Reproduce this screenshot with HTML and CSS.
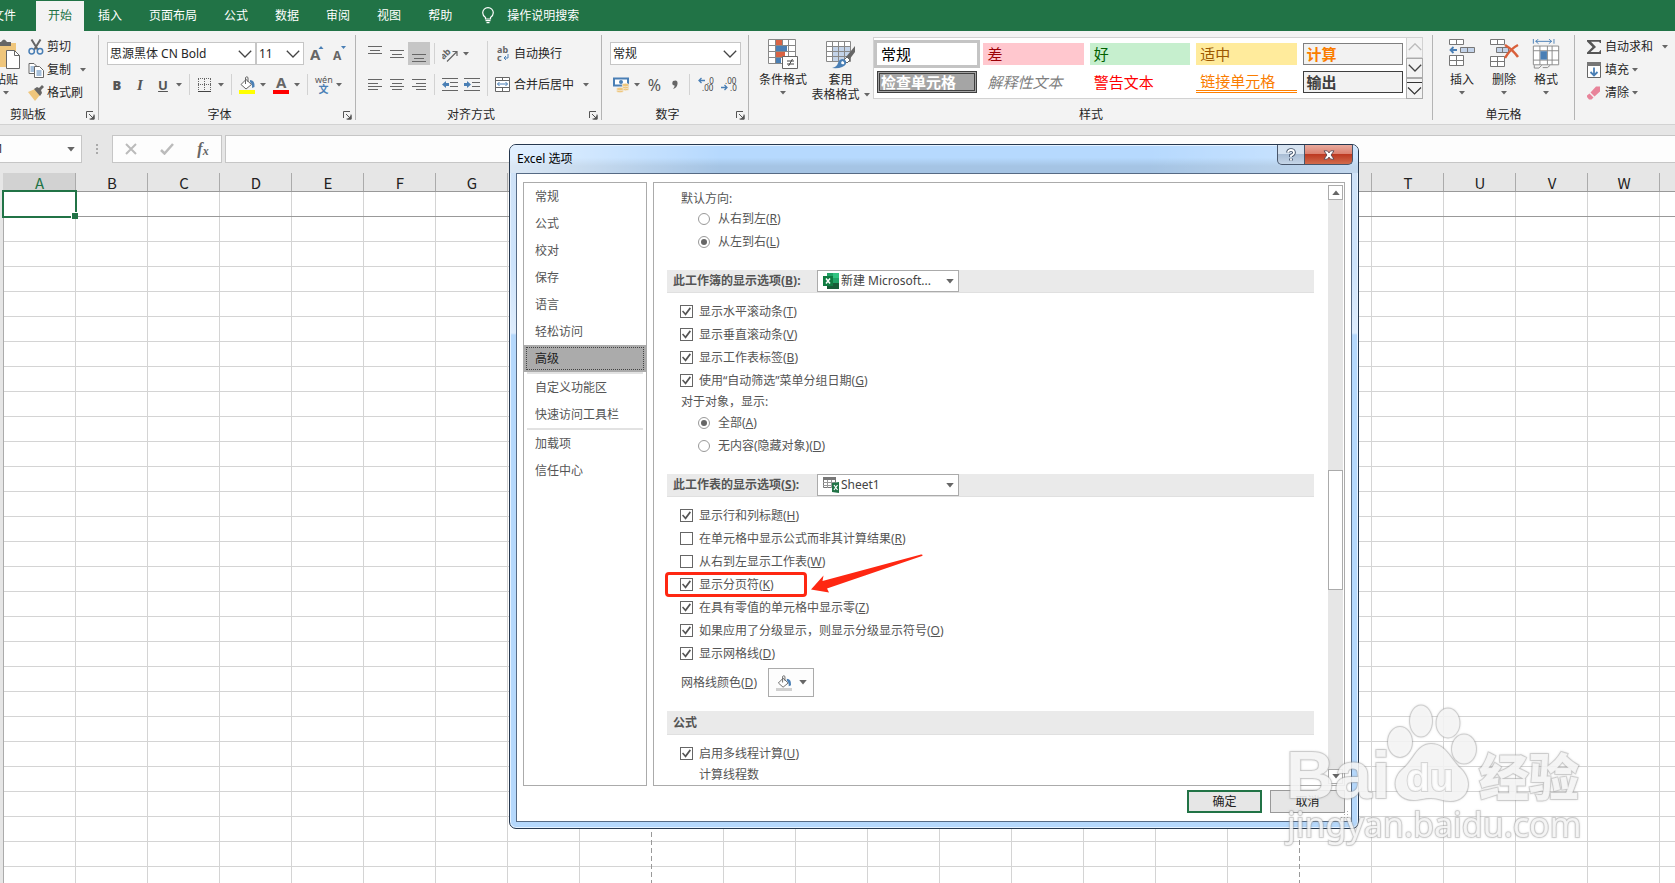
FILE: index.html
```
<!DOCTYPE html>
<html lang="zh-CN">
<head>
<meta charset="utf-8">
<title>Excel 选项</title>
<link rel="stylesheet" href="styles.css">
</head>
<body>
<svg class="sprite" aria-hidden="true">
  <symbol id="caret" viewBox="0 0 6 4"><path d="M0 0h6L3 3.6z" fill="#666"/></symbol>
  <symbol id="chev" viewBox="0 0 14 8"><path d="M.8.8 7 7 13.2.8" fill="none" stroke="#444" stroke-width="1.3"/></symbol>
  <symbol id="launch" viewBox="0 0 9 9"><path d="M.5 7V.5H7M3 3l4 4M8 3.5V8H3.5" fill="none" stroke="#555"/><path d="M8.500 4v4.500H4z" fill="#555"/></symbol>
  <symbol id="bucket" viewBox="0 0 16 16"><path d="M7 3.500 2 8.500 7 13l5.500-4.500z" fill="#fff" stroke="#666"/><path d="M6.500 8V1.500q1.500-1.500 2.500 0V6" fill="none" stroke="#666"/><path d="M11 4q5 0 4.500 7l-2.500 1q.5-4-2-6z" fill="#4a7fb5"/></symbol>
</svg>

<nav class="tabs">
  <button>文件</button><button class="on">开始</button><button>插入</button><button>页面布局</button><button>公式</button><button>数据</button><button>审阅</button><button>视图</button><button>帮助</button>
  <button class="tell"><svg width="12" height="17" viewBox="0 0 12 17" fill="none" stroke="#fff" stroke-width="1.200"><path d="M3.500 12V10.500Q.7 8.500.7 5.800A5.300 5.200 0 0 1 11.300 5.800Q11.300 8.500 8.500 10.500V12zM3.500 13.700h5M4.500 15.700h3"/></svg>操作说明搜索</button>
</nav>

<div class="ribbon">
  <section class="group g-clip">
    <div class="body">
      <button class="big paste"><svg width="28" height="30" viewBox="0 0 28 30"><path d="M0 4h24v24H0z" fill="#efc67c"/><path d="M5 7V3h4q3-5 6 0h4v4z" fill="#666"/><path d="M14.500 11.500h8l5 5v13h-13z" fill="#fff" stroke="#666"/><path d="M22.500 11.500v5h5" fill="none" stroke="#666"/></svg><span>粘贴</span><svg class="caret"><use href="#caret"/></svg></button>
      <div class="list">
        <button><svg width="16" height="16" viewBox="0 0 16 16" fill="none"><path d="M3.500.5 10 11M12.500.5 6 11" stroke="#666" stroke-width="2"/><circle cx="3.700" cy="12.300" r="2.700" stroke="#4a7fb5" stroke-width="1.500"/><circle cx="12" cy="12.300" r="2.700" stroke="#4a7fb5" stroke-width="1.500"/></svg>剪切</button>
        <button class="wide"><svg width="16" height="16" viewBox="0 0 16 16" fill="#fff" stroke="#666"><path d="M1 1.500h5l3 3v7H1z"/><path d="M2.500 5h4M2.500 7h4M2.500 9h4" stroke="#4a7fb5"/><path d="M6.500 4.500h5l4 4v7h-9z"/><path d="M8.500 9h5M8.500 11h5M8.500 13h5" stroke="#4a7fb5"/></svg>复制<svg class="caret"><use href="#caret"/></svg></button>
        <button><svg width="16" height="16" viewBox="0 0 16 16"><path d="M0 7l7-3 5 6-5 6z" fill="#efc67c"/><path d="M6 4l3-2 2 1 3-3 2 2-3 3 1 3-2 3z" fill="#666"/></svg>格式刷</button>
      </div>
    </div>
    <footer>剪贴板<svg class="launch"><use href="#launch"/></svg></footer>
  </section>

  <section class="group g-font">
    <div class="body stack">
      <div class="row tight">
        <label class="combo font-name"><select aria-label="字体"><option>思源黑体 CN Bold</option></select><svg class="chev"><use href="#chev"/></svg></label>
        <label class="combo font-size"><select aria-label="字号"><option>11</option></select><svg class="chev"><use href="#chev"/></svg></label>
        <button class="grow" aria-label="增大字号"><svg width="16" height="18" viewBox="0 0 16 18"><text x="0" y="15" class="ico-a">A</text><path d="M8.500 4h5L11 1z" fill="#4a7fb5"/></svg></button>
        <button class="grow" aria-label="减小字号"><svg width="16" height="18" viewBox="0 0 16 18"><text x="1" y="15" class="ico-a small">A</text><path d="M9 1h5l-2.500 3z" fill="#4a7fb5"/></svg></button>
      </div>
      <div class="row marks">
        <button class="ch"><b>B</b></button><button class="ch"><i>I</i></button>
        <button class="split"><span class="ch"><u>U</u></span><svg class="caret"><use href="#caret"/></svg></button><span class="sep"></span>
        <button class="split" aria-label="边框"><svg width="16" height="16" viewBox="0 0 16 16"><path d="M1.500 2v11M7.500 2v11M13.500 2v11M1 1.500h13M1 7.500h13" stroke="#666" stroke-dasharray="1 1"/><path d="M1 14.500h13" stroke="#444"/></svg><svg class="caret"><use href="#caret"/></svg></button><span class="sep"></span>
        <button class="split" aria-label="填充颜色"><svg width="16" height="18" viewBox="0 0 16 18"><use href="#bucket" width="16" height="16"/><path d="M0 14h16v4H0z" fill="#ff0"/></svg><svg class="caret"><use href="#caret"/></svg></button>
        <button class="split" aria-label="字体颜色"><svg width="16" height="18" viewBox="0 0 16 18"><text x="3" y="12" class="ico-a">A</text><path d="M0 14h16v4H0z" fill="red"/></svg><svg class="caret"><use href="#caret"/></svg></button><span class="sep"></span>
        <button class="split wen"><span>wén<em>文</em></span><svg class="caret"><use href="#caret"/></svg></button>
      </div>
    </div>
    <footer>字体<svg class="launch"><use href="#launch"/></svg></footer>
  </section>

  <section class="group g-align">
    <div class="body">
      <div class="stack aligns">
        <div class="row">
          <button class="sq" aria-label="顶端对齐"><svg width="14" height="18" viewBox="0 0 14 18" stroke="#666"><path d="M0 1.500h14M2 5.500h10M0 8.500h14"/></svg></button><button class="sq" aria-label="垂直居中"><svg width="14" height="18" viewBox="0 0 14 18" stroke="#666"><path d="M0 5.500h14M2 9.500h10M0 12.500h14"/></svg></button><button class="sq on" aria-label="底端对齐"><svg width="14" height="18" viewBox="0 0 14 18" stroke="#666"><path d="M0 9.500h14M2 13.500h10M0 16.500h14"/></svg></button><span class="sep"></span>
          <button class="split" aria-label="方向"><svg width="16" height="16" viewBox="0 0 16 16"><text x="-1" y="10" class="ico-ab" transform="rotate(-45 5 9)">ab</text><path d="M5 15.500 14.500 6M10.500 5.500h4.500v4.500" fill="none" stroke="#666" stroke-width="1.200"/></svg><svg class="caret"><use href="#caret"/></svg></button>
        </div>
        <div class="row">
          <button class="sq" aria-label="左对齐"><svg width="14" height="12" viewBox="0 0 14 12" stroke="#666"><path d="M0 .5h14M0 4.500h10M0 7.500h14M0 10.500h10"/></svg></button><button class="sq" aria-label="居中"><svg width="14" height="12" viewBox="0 0 14 12" stroke="#666"><path d="M0 .5h14M2 4.500h10M0 7.500h14M2 10.500h10"/></svg></button><button class="sq" aria-label="右对齐"><svg width="14" height="12" viewBox="0 0 14 12" stroke="#666"><path d="M0 .5h14M4 4.500h10M0 7.500h14M4 10.500h10"/></svg></button><span class="sep"></span>
          <button class="indent" aria-label="减少缩进"><svg width="16" height="13" viewBox="0 0 16 13"><path d="M0 .5h16M8 4.500h8M8 8.500h8M0 12.500h16" stroke="#666"/><path d="M4 3v2h3v3H4v2L0 6.500z" fill="#4a7fb5"/></svg></button>
          <button class="indent" aria-label="增加缩进"><svg width="16" height="13" viewBox="0 0 16 13"><path d="M0 .5h16M8 4.500h8M8 8.500h8M0 12.500h16" stroke="#666"/><path d="M3 3v2H0v3h3v2l4-3.500z" fill="#4a7fb5"/></svg></button>
        </div>
      </div>
      <span class="vsep"></span>
      <div class="stack wraps">
        <button class="row"><svg width="16" height="18" viewBox="0 0 16 18"><text x="2" y="8" class="ico-ab">ab</text><text x="2" y="16" class="ico-ab">c</text><path d="M13 9v4H9m2-2-2 2 2 2" fill="none" stroke="#4a7fb5"/></svg>自动换行</button>
        <button class="row wide"><svg width="16" height="15" viewBox="0 0 16 15" fill="#fff" stroke="#666"><path d="M.5.5h14v14H.5zM.5 3.500h14M.5 10.500h14M7.500.5v3M7.500 10.500v4"/><path d="M2.500 7h10M4.500 5 2.500 7l2 2M10.500 5l2 2-2 2" stroke="#4a7fb5" fill="none"/></svg>合并后居中<svg class="caret"><use href="#caret"/></svg></button>
      </div>
    </div>
    <footer>对齐方式<svg class="launch"><use href="#launch"/></svg></footer>
  </section>

  <section class="group g-num">
    <div class="body stack">
      <label class="combo"><select aria-label="数字格式"><option>常规</option></select><svg class="chev"><use href="#chev"/></svg></label>
      <div class="row nums">
        <button class="split" aria-label="会计数字格式"><svg width="16" height="16" viewBox="0 0 16 16"><path d="M1 1.500h14v7H1z" fill="#fff" stroke="#4a7fb5" stroke-width="2"/><circle cx="8" cy="5" r="2" fill="#4a7fb5"/><g fill="#efc67c" stroke="#f3f3f3" stroke-width=".6"><ellipse cx="12.500" cy="12" rx="3.500" ry="1.700"/><ellipse cx="12.500" cy="10" rx="3.500" ry="1.700"/><ellipse cx="12.500" cy="8" rx="3.500" ry="1.700"/><ellipse cx="7" cy="14" rx="3.500" ry="1.700"/><ellipse cx="7" cy="12" rx="3.500" ry="1.700"/></g></svg><svg class="caret"><use href="#caret"/></svg></button>
        <button class="pct">%</button><button class="comma" aria-label="千位分隔样式"><svg width="6" height="10" viewBox="0 0 6 10"><path d="M1 1q5-2 4.500 3Q5 8 1 9q2-2 1.500-3.500Q-1 5 1 1z" fill="#666"/></svg></button><span class="sep"></span>
        <button aria-label="增加小数位数"><svg width="16" height="15" viewBox="0 0 16 15"><text x="9" y="7" class="ico-d">.0</text><text x="4" y="14" class="ico-d">.00</text><path d="M7 3.500H1M3.500 1 1 3.500 3.500 6" fill="none" stroke="#4a7fb5" stroke-width="1.300"/></svg></button>
        <button aria-label="减少小数位数"><svg width="16" height="15" viewBox="0 0 16 15"><text x="4" y="7" class="ico-d">.00</text><text x="9" y="14" class="ico-d">.0</text><path d="M0 10.500h6M3.500 8 6 10.500 3.500 13" fill="none" stroke="#4a7fb5" stroke-width="1.300"/></svg></button>
      </div>
    </div>
    <footer>数字<svg class="launch"><use href="#launch"/></svg></footer>
  </section>

  <section class="group g-style">
    <div class="body">
      <button class="big"><svg width="30" height="30" viewBox="0 0 30 30"><path d="M.5.5h27v24H.5z" fill="#fff"/><path d="M8 1h6v5H8z M8 13h9v5H8z" fill="#d96344"/><path d="M8 7h11v5H8zM8 19h5v5H8z" fill="#4a7fb5"/><path d="M.5.5h27v24H.5zM.5 6.500h27M.5 12.500h27M.5 18.500h27M7.500.5v24M14.500.5v6M20.500.5v24" fill="none" stroke="#888"/><path d="M14.500 17.500h15v12h-15z" fill="#fff" stroke="#666"/><path d="M19 22h7M19 25h7M24.500 20 20.500 27" stroke="#444"/></svg><span>条件格式</span><svg class="caret"><use href="#caret"/></svg></button>
      <button class="big two"><svg width="30" height="30" viewBox="0 0 30 30"><path d="M.5 2.500h24v20H.5z" fill="#fff"/><path d="M7 8h18v14H7z" fill="#c3d3e9"/><path d="M.5 2.500h24v20H.5zM.5 7.500h24M.5 12.500h24M.5 17.500h24M6.500 2.500v20M12.500 2.500v20M18.500 2.500v20" fill="none" stroke="#888"/><path d="M29 7v6l-6 8-3-3z" fill="#666"/><path d="M21 18l3 3-3 3-3-3z" fill="#fff" stroke="#666"/><path d="M17 20q4 1 3 5-3 5-14 4 5-1 6-5 1-4 5-4z" fill="#4a7fb5"/><path d="M16 22q3 1 2 3-2 1-3-1z" fill="#fff"/></svg><span>套用</span><span class="second">表格格式<svg class="caret"><use href="#caret"/></svg></span></button>
      <div class="gallery">
        <div class="cells">
          <button class="c-normal">常规</button><button class="c-bad">差</button><button class="c-good">好</button><button class="c-mid">适中</button><button class="c-calc">计算</button>
          <button class="c-check">检查单元格</button><button class="c-expl">解释性文本</button><button class="c-warn">警告文本</button><button class="c-link">链接单元格</button><button class="c-out">输出</button>
        </div>
        <div class="scrollers">
          <button aria-label="上一行"><svg width="14" height="8" viewBox="0 0 14 8"><path d="M.8 7 7 .8 13.200 7" fill="none" stroke="#bbb" stroke-width="1.300"/></svg></button>
          <button aria-label="下一行"><svg class="chev"><use href="#chev"/></svg></button>
          <button aria-label="其他"><svg width="15" height="13" viewBox="0 0 15 13"><path d="M0 .5h15M1 5.500l6.500 6.500L14 5.500" fill="none" stroke="#333" stroke-width="1.200"/></svg></button>
        </div>
      </div>
    </div>
    <footer>样式</footer>
  </section>

  <section class="group g-cells">
    <div class="body">
      <button class="big"><svg width="28" height="30" viewBox="0 0 28 30" fill="#fff" stroke="#777"><path d="M1.500.5h14v5h-14zM8.500.5v5M1.500 16.500h14v10h-14zM8.500 16.500v10M1.500 21.500h14"/><path d="M12.500 8.500h14v5h-14zM19.500 8.500v5" fill="#c3d3e9"/><path d="M9 11H3M5.500 8 2.500 11l3 3" stroke="#4a7fb5" stroke-width="1.800" fill="none"/></svg><span>插入</span><svg class="caret"><use href="#caret"/></svg></button>
      <button class="big"><svg width="30" height="30" viewBox="0 0 30 30" fill="#fff" stroke="#777"><path d="M1.500.5h14v5h-14zM8.500.5v5M1.500 17.500h14v10h-14zM8.500 17.500v10M1.500 22.500h14"/><path d="M7.500 8.500h12v5h-12zM13.500 8.500v5" fill="#c3d3e9"/><path d="M16 6q8 5 13 12M29 6q-8 4-13 13" stroke="#d9603b" stroke-width="2.500" fill="none"/></svg><span>删除</span><svg class="caret"><use href="#caret"/></svg></button>
      <button class="big"><svg width="28" height="32" viewBox="0 0 28 32"><path d="M.5 0v5M22.500 0v5M3 2.500h17M6 0 3 2.500 6 5M17 0l3 2.500L17 5" stroke="#4a7fb5" fill="none"/><path d="M.5 7.500h27v20h-27z" fill="#fff"/><path d="M.5 7.500h27v20h-27zM.5 12.500h27M.5 22.500h27M7.500 7.500v20M15.500 7.500v20M20.500 7.500v20" stroke="#888" fill="none"/><path d="M8 13h7v9H8z" fill="#4a7fb5"/><path d="M1.500 28v3h5l3-3M10.500 30.500h5l3-2.500" fill="none" stroke="#888"/></svg><span>格式</span><svg class="caret"><use href="#caret"/></svg></button>
    </div>
    <footer>单元格</footer>
  </section>

  <section class="group g-edit">
    <div class="body">
      <div class="list">
        <button class="wide"><svg width="16" height="16" viewBox="0 0 16 16"><path d="M1 1h14v3H14L13 2.800H5L10 8l-5.500 5H13l1.500-2h.5v4H1v-1.500L6.500 8 1 2.500z" fill="#555"/></svg>自动求和<svg class="caret"><use href="#caret"/></svg></button>
        <button><svg width="16" height="16" viewBox="0 0 16 16"><path d="M1.500 1.500h13v14h-13z" fill="#fff" stroke="#666"/><path d="M1 0h14v4H1z" fill="#777"/><path d="M8 5.500v8M4.500 10 8 13.500l3.500-3.500" fill="none" stroke="#4a7fb5" stroke-width="1.800"/></svg>填充<svg class="caret"><use href="#caret"/></svg></button>
        <button><svg width="16" height="16" viewBox="0 0 16 16" fill="#e8849a"><path d="M10 1.500h4v5l-5.500 5-4-4zM3.500 8.500l4 4-2 2H3L1 12v-1.500z"/></svg>清除<svg class="caret"><use href="#caret"/></svg></button>
      </div>
    </div>
  </section>
</div>

<div class="formula">
  <label class="namebox"><input aria-label="名称框" value="A1"><svg class="caret"><use href="#caret"/></svg></label>
  <svg class="dots" width="2" height="12" viewBox="0 0 2 12" fill="#aaa"><path d="M0 0h2v2H0zM0 4h2v2H0zM0 8h2v2H0z"/></svg>
  <div class="fx"><button aria-label="取消输入"><svg width="12" height="12" viewBox="0 0 12 12"><path d="M1 1l10 10M11 1 1 11" stroke="#bbb" stroke-width="2"/></svg></button><button aria-label="输入"><svg width="14" height="12" viewBox="0 0 14 12"><path d="M1 7l3.500 3.500L13 1" fill="none" stroke="#bbb" stroke-width="2.500"/></svg></button><button class="fn"><i>f</i><i class="x">x</i></button></div>
  <input class="finput" aria-label="编辑栏">
</div>

<main class="sheet">
  <table class="heads"><thead><tr><th class="sel">A</th><th>B</th><th>C</th><th>D</th><th>E</th><th>F</th><th>G</th><th>H</th><th>I</th><th>J</th><th>K</th><th>L</th><th>M</th><th>N</th><th>O</th><th>P</th><th>Q</th><th>R</th><th>S</th><th>T</th><th>U</th><th>V</th><th>W</th><th>X</th></tr></thead></table>
  <div class="grid"><span class="cursor"></span><span class="brk one"></span><span class="brk two"></span></div>
</main>

<div class="dialog" role="dialog" aria-labelledby="dlg-title">
  <header><h1 id="dlg-title">Excel 选项</h1>
    <div class="winbtns"><button class="help" aria-label="帮助"><svg width="12" height="14" viewBox="0 0 12 14"><path d="M3 4.500q0-2.500 3-2.500t3 2.500Q9 6.500 6 7.500V9M6 10.500v2" fill="none" stroke="#3c4c63" stroke-width="3.600"/><path d="M3 4.500q0-2.500 3-2.500t3 2.500Q9 6.500 6 7.500V9M6 10.500v2" fill="none" stroke="#fff" stroke-width="1.800"/></svg></button><button class="close" aria-label="关闭"><svg width="12" height="10" viewBox="0 0 14 12"><path d="M1 1h4l2 2.500L9 1h4L9.500 6l3.500 5H9L7 8.500 5 11H1l3.500-5z" fill="#fff" stroke="#50404a"/></svg></button></div>
  </header>
  <div class="client">
    <div class="panes">
      <nav class="side">
        <button>常规</button><button>公式</button><button>校对</button><button>保存</button><button>语言</button><button>轻松访问</button><button class="on">高级</button><hr><button>自定义功能区</button><button>快速访问工具栏</button><hr><button>加载项</button><button>信任中心</button>
      </nav>
      <div class="pane">
        <form class="options">
          <p class="sub first">默认方向:</p>
          <label class="opt rad"><input type="radio" name="dir"><span>从右到左(<u>R</u>)</span></label>
          <label class="opt rad"><input type="radio" name="dir" checked><span>从左到右(<u>L</u>)</span></label>
          <div class="bar"><label for="book">此工作簿的显示选项(<u>B</u>):</label><span class="drop"><svg width="16" height="16" viewBox="0 0 16 16"><path d="M4 0h12v16H4z" fill="#21a366"/><path d="M10 0h6v5h-6z" fill="#33c481"/><path d="M4 5h6v5H4z" fill="#107c41"/><path d="M4 10h12v6H4z" fill="#185c37"/><path d="M0 3h10v10H0z" fill="#107c41"/><path d="M3 5.500l4 5M7 5.500l-4 5" stroke="#fff" stroke-width="1.500"/></svg><select id="book"><option>新建 Microsoft...</option></select><svg class="caret"><use href="#caret"/></svg></span></div>
          <label class="opt"><input type="checkbox" checked><span>显示水平滚动条(<u>T</u>)</span></label>
          <label class="opt"><input type="checkbox" checked><span>显示垂直滚动条(<u>V</u>)</span></label>
          <label class="opt"><input type="checkbox" checked><span>显示工作表标签(<u>B</u>)</span></label>
          <label class="opt"><input type="checkbox" checked><span>使用“自动筛选”菜单分组日期(<u>G</u>)</span></label>
          <p class="sub objects">对于对象，显示:</p>
          <label class="opt rad"><input type="radio" name="obj" checked><span>全部(<u>A</u>)</span></label>
          <label class="opt rad"><input type="radio" name="obj"><span>无内容(隐藏对象)(<u>D</u>)</span></label>
          <div class="bar"><label for="sheet">此工作表的显示选项(<u>S</u>):</label><span class="drop"><svg width="16" height="16" viewBox="0 0 16 16"><path d="M.5.500h12v10H.5z" fill="#fff" stroke="#777"/><path d="M0 0h13v3H0z" fill="#777"/><path d="M0 5.500h13M0 8.500h13M4.500 3v8M8.500 3v8" stroke="#999"/><path d="M9 6l7-1v11l-7-1z" fill="#217346"/><path d="M11 8l3.500 5M14.500 8 11 13" stroke="#fff" stroke-width="1.200"/></svg><select id="sheet"><option>Sheet1</option></select><svg class="caret"><use href="#caret"/></svg></span></div>
          <label class="opt"><input type="checkbox" checked><span>显示行和列标题(<u>H</u>)</span></label>
          <label class="opt"><input type="checkbox"><span>在单元格中显示公式而非其计算结果(<u>R</u>)</span></label>
          <label class="opt"><input type="checkbox"><span>从右到左显示工作表(<u>W</u>)</span></label>
          <div class="marked"><label class="opt"><input type="checkbox" checked><span>显示分页符(<u>K</u>)</span></label>
            <span class="frame"></span>
            <svg class="arrow" width="114" height="40" viewBox="0 0 114 40"><path d="M0 35.500 12.500 21.500 11.500 27 110 .5q3-.2 1 1.500L16 34.500l2 4z" fill="#fe2712"/></svg></div>
          <label class="opt"><input type="checkbox" checked><span>在具有零值的单元格中显示零(<u>Z</u>)</span></label>
          <label class="opt"><input type="checkbox" checked><span>如果应用了分级显示，则显示分级显示符号(<u>O</u>)</span></label>
          <label class="opt"><input type="checkbox" checked><span>显示网格线(<u>D</u>)</span></label>
          <div class="color"><label for="gridcolor">网格线颜色(<u>D</u>)</label><button type="button" id="gridcolor"><svg width="16" height="16" viewBox="0 0 16 16"><use href="#bucket" width="16" height="15"/><path d="M0 13h16v3H0z" fill="#d0d0d0"/></svg><svg class="caret"><use href="#caret"/></svg></button></div>
          <div class="bar last">公式</div>
          <label class="opt"><input type="checkbox" checked><span>启用多线程计算(<u>U</u>)</span></label>
          <p class="sub deep">计算线程数</p>
        </form>
        <div class="scroll"><button aria-label="向上"><svg class="caret up"><use href="#caret"/></svg></button><span class="thumb"></span><button aria-label="向下"><svg class="caret"><use href="#caret"/></svg></button></div>
      </div>
    </div>
    <div class="actions"><button class="ok">确定</button><button>取消</button></div>
    <svg class="grip" width="8" height="8" viewBox="0 0 8 8" fill="#aaa"><path d="M6 0h1v1H6zM3 3h1v1H3zM6 3h1v1H6zM0 6h1v1H0zM3 6h1v1H3zM6 6h1v1H6z"/></svg>
  </div>
</div>

<svg class="watermark" width="310" height="150" viewBox="0 0 310 150" aria-hidden="true">
  <text x="2" y="95" class="wm-b">Bai</text>
  <g class="wm"><ellipse cx="116" cy="39" rx="12" ry="15"/><ellipse cx="137" cy="18" rx="11" ry="15.500"/><ellipse cx="164" cy="20" rx="11.500" ry="14.500"/><ellipse cx="180" cy="46" rx="12" ry="14.500"/><path d="M147 41c-14 0-17 16-28 25-14 12-7 31 10 31 8 0 10-2 18-2s11 3 19 3c18 0 24-19 11-32-11-10-15-25-30-25z"/></g>
  <text x="122" y="88" class="wm-du">du</text>
  <text x="195" y="93" class="wm-cn">经验</text>
  <text x="3" y="134" class="wm-url">jingyan.baidu.com</text>
</svg>
</body>
</html>
```
FILE: styles.css
```
* { box-sizing: border-box; }
body {
  margin: 0;
  height: 100vh;
  display: flex;
  flex-direction: column;
  overflow: hidden;
  position: relative;
  background: #fff;
  color: #262626;
  font: 12px/16px "Noto Sans", "Noto Sans CJK SC", sans-serif;
}
button, select, input { font: inherit; color: inherit; margin: 0; padding: 0; border: 0; background: none; border-radius: 0; outline: 0; }
button { display: inline-flex; align-items: center; justify-content: center; white-space: nowrap; }
select { appearance: none; }
svg { flex: none; display: block; }
p, h1 { margin: 0; font-size: 12px; font-weight: normal; }
.sprite { position: absolute; width: 0; height: 0; }
.caret { width: 6px; height: 4px; }
.chev { width: 14px; height: 8px; }

/* ribbon tabs */
.tabs { flex: none; height: 31px; padding-top: 1px; margin-left: -22px; background: #217346; color: #fff; display: flex; }
.tabs button { padding: 0 13px 1px 14px; }
.tabs .on { background: #f3f3f3; color: #217346; margin: 0 0 0 7px; padding: 0 12px 1px; }
.tabs button:first-child { padding-right: 13px; }
.tabs .tell { gap: 13px; padding-left: 17px; }

/* ribbon */
.ribbon { flex: none; height: 94px; padding: 4px 0; background: #f3f3f3; border-bottom: 1px solid #d2d2d2; display: flex; }
.group { flex: none; height: 85px; padding-left: 8px; border-right: 1px solid #b4b4b4; display: flex; flex-direction: column; position: relative; }
.group .body { height: 72px; display: flex; }
.group footer { height: 13px; text-align: center; margin-left: -8px; padding-right: 15px; }
.launch { position: absolute; right: 3px; bottom: 0; width: 9px; height: 9px; }
.g-clip { width: 99px; padding-left: 0; }
.group.g-clip footer { margin: 0; padding-right: 42px; }
.g-font { width: 257px; }
.g-align { width: 246px; }
.g-num { width: 147px; }
.g-style { flex: 1 1 auto; min-width: 0; padding: 0 9px 0 10px; }
.g-cells { width: 142px; }
.g-edit { width: 100px; padding-left: 11px; border: 0; }
.group.g-style footer { margin: 0; padding: 0; }
.group.g-cells footer { padding: 0; }
.list { display: flex; flex-direction: column; align-items: flex-start; }
.list button { height: 23px; gap: 3px; }
.wide .caret { margin-left: 6px; }
.g-clip .list { margin-left: 8px; }
.big { flex-direction: column; justify-content: flex-start; padding-top: 4px; line-height: 15px; width: 48px; }
.big > svg:first-child { height: 30px; margin-bottom: 3px; }
.big > .caret { margin-top: 4px; }
.big.paste { width: 28px; margin-left: -8px; }
.big.two { width: 57px; margin-left: 5px; }
.big .second { display: flex; align-items: center; gap: 4px; }
.g-cells .big { width: 42px; }
.body.stack, .stack { display: flex; flex-direction: column; gap: 8px; padding-top: 7px; }
.row { display: flex; align-items: center; height: 23px; }
.tight .grow { margin-left: 6px; }
.combo { display: grid; grid-template-columns: 1fr; align-items: center; height: 23px; border: 1px solid #c6c6c6; background: #fff; }
.combo select { grid-area: 1 / 1; height: 20px; padding-left: 2px; }
.combo .chev { grid-area: 1 / 1; justify-self: end; margin-right: 3px; pointer-events: none; }
.font-name { width: 149px; }
.font-size { width: 48px; }
.g-num .combo { width: 131px; }
.marks { gap: 7px; padding-left: 2px; color: #555; }
.ch { width: 16px; text-align: center; font-size: 13px; font-weight: bold; }
.ch i { font-family: "Liberation Serif", serif; font-size: 15px; }
.split { width: 27px; justify-content: space-between; }
.sep { width: 1px; height: 21px; background: #d2d2d2; margin: 0 1px; }
.marks .sep { margin: 0; }
.ico-a { font: bold 15px "Noto Sans", sans-serif; fill: #666; }
.ico-a.small { font-size: 12px; }
.ico-ab { font: bold 9px "Noto Sans", sans-serif; fill: #666; }
.ico-d { font: 8px "Noto Sans", sans-serif; fill: #444; }
.wen span { font-size: 9px; line-height: 8px; width: 17px; }
.wen em { display: block; font: bold 10px/10px "Noto Sans CJK SC", sans-serif; color: #4a7fb5; }
.wen { gap: 4px; }
.aligns { width: 123px; }
.sq { width: 22px; height: 23px; }
.sq.on { background: #c6c6c6; }
.aligns .sep { margin: 0 7px 0 4px; }
.indent { margin-right: 6px; }
.vsep { width: 1px; height: 55px; margin: 6px 7px 0 0; background: #d2d2d2; }
.wraps { align-items: flex-start; }
.wraps .row { gap: 3px; }
.nums { gap: 7px; padding-left: 3px; }
.pct { width: 15px; font-size: 16px; color: #555; }
.comma { width: 12px; }

.gallery { flex: 1; min-width: 0; height: 62px; margin: 2px 0 0 4px; display: flex; }
.cells { flex: 1; padding: 5px 3px; border: 1px solid #d2d2d2; border-right: 0; background: #fff; display: grid; grid-template-columns: repeat(5, minmax(0, 1fr)); grid-auto-rows: 22px; gap: 6px; }
.cells button { justify-content: flex-start; padding-left: 4px; font-size: 15px; line-height: 20px; }
.cells .c-normal { box-shadow: 0 0 0 3px #c4c4c4; color: #000; }
.c-bad { background: #ffc7ce; }
.cells .c-bad { color: #9c0006; }
.cells .c-good { background: #c6efce; color: #006100; }
.cells .c-mid { background: #ffeb9c; color: #9c5700; }
.cells .c-calc { background: #f2f2f2; color: #fa7d00; border: 1px solid #7f7f7f; font-weight: bold; padding-left: 3px; }
.cells .c-check { background: #a5a5a5; color: #fff; border: 3px double #3f3f3f; font-weight: bold; padding-left: 1px; }
.cells .c-expl { color: #7f7f7f; font-style: italic; }
.cells .c-warn { color: #f00; }
.cells .c-link { color: #fa7d00; border-bottom: 3px double #ff8001; }
.cells .c-out { background: #f2f2f2; color: #3f3f3f; border: 1px solid #3f3f3f; font-weight: bold; padding-left: 3px; }
.scrollers { width: 17px; display: flex; flex-direction: column; }
.scrollers button { flex: 1; border: 1px solid #ababab; }
.scrollers button:first-child { border-color: #d2d2d2; }

/* formula bar */
.formula { flex: none; height: 38px; padding-top: 10px; background: #e6e6e6; display: flex; }
.formula > label, .fx, .finput { height: 28px; border: 1px solid #c6c6c6; background: #fdfdfd; }
.namebox { width: 82px; border-left: 0 !important; display: flex; align-items: center; }
.namebox input { width: 68px; margin-left: -11px; flex: none; color: #333; }
.namebox .caret { width: 8px; height: 5px; margin-left: 10px; }
.dots { margin: 9px 14px 0; }
.fx { width: 110px; margin-right: 3px; display: flex; }
.fx button { flex: 1; }
.fn { font: bold 16px "Liberation Serif", serif; color: #666; }
.fn .x { font-size: 12px; padding-top: 4px; }
.finput { flex: 1; min-width: 0; border-right: 0 !important; }

/* worksheet */
.sheet { flex: 1; min-height: 0; display: flex; flex-direction: column; overflow: hidden; background: #e6e6e6; padding-top: 10px; }
.heads { flex: none; width: 1729px; margin-left: 3px; table-layout: fixed; border-collapse: separate; border-spacing: 0; border-bottom: 1px solid #999; }
.heads th { width: 72px; height: 18px; padding: 2px 0 1px 1px; font: 15px/15px "Noto Sans CJK SC", sans-serif; color: #222; border-right: 1px solid #ababab; }
.heads .sel { width: 73px; background: #d2d2d2; color: #217346; }
.grid {
  flex: 1; position: relative; margin-left: 3px; border-left: 1px solid #ababab;
  background:
    linear-gradient(#999, #999) 0 24px / 100% 1px no-repeat,
    repeating-linear-gradient(90deg, transparent 0 71px, #d4d4d4 71px 72px),
    repeating-linear-gradient(transparent 0 24px, #d4d4d4 24px 25px),
    #fff;
}
.cursor { position: absolute; left: -2px; top: -2px; width: 75px; height: 28px; border: 2px solid #217346; }
.cursor::after { content: ""; position: absolute; right: -3px; bottom: -3px; width: 6px; height: 6px; background: #217346; border: solid #fff; border-width: 1px 0 0 1px; }
.brk { position: absolute; top: 0; bottom: 0; width: 1px; background: repeating-linear-gradient(#999 0 5px, #fff 5px 8px); }
.brk.one { left: 647px; }
.brk.two { left: 1295px; }

/* options window */
.dialog {
  position: absolute; left: 509px; top: 144px; width: 850px; padding: 0 6px 6px;
  border: 1px solid #26384f; border-radius: 7px;
  box-shadow: inset 0 0 0 1px #e6f2ff;
  background: linear-gradient(#d0e2f6 0, #cde3fb 120px, #deecfc 188px, #b5d8fc 190px, #b5d8fc);
}
.dialog header { height: 28px; margin: 0 -6px; padding: 0 5px 0 7px; display: flex; justify-content: space-between; border-radius: 6px 6px 0 0;
  background: linear-gradient(90deg, #ffffff99, #ffffff33 16%, #ffffff00 25%, #ffffff00 75%, #ffffff55), linear-gradient(#b6d9fe 0 45%, #a5c4e4 75%); box-shadow: inset 0 1px #e6f2ff; }
.dialog h1 { color: #000; padding-top: 6px; }
.winbtns { display: flex; height: 20px; }
.winbtns button { border: 1px solid #48566b; border-top: 0; }
.winbtns .help { width: 28px; border-radius: 0 0 0 5px; background: linear-gradient(#d5e2f0 45%, #a9bdd4 50%, #c6d6e8); }
.winbtns .close { width: 48px; border-radius: 0 0 5px 0; border-left: 0; background: linear-gradient(#e9aa9e 0, #dc8371 45%, #bd3a22 50%, #d16b4c); }
.client { position: relative; background: #fff; border: 1px solid #566a84; padding: 8px 6px 8px 6px; display: flex; flex-direction: column; color: #555; }
.panes { display: flex; gap: 6px; height: 604px; }
.side { width: 124px; border: 1px solid #ababab; display: flex; flex-direction: column; }
.side button { height: 27px; flex: none; justify-content: flex-start; padding-left: 11px; }
.side .on { background: #ababab; color: #222; outline: 1px dotted #444; outline-offset: -3px; }
.side hr { width: 116px; height: 2px; margin: 0 auto; border: 0; background: #e2e2e2; flex: none; }
.pane { flex: 1; border: 1px solid #ababab; display: flex; overflow: hidden; padding-left: 13px; }
.options { flex: 1; display: flex; flex-direction: column; }
.sub { margin-left: 14px; flex: none; }
.sub.first { margin-top: 7px; height: 17px; line-height: 18px; }
.sub.objects { height: 19px; line-height: 20px; }
.sub.deep { margin-left: 32px; height: 20px; line-height: 20px; }
.opt { display: flex; align-items: center; gap: 6px; height: 23px; padding-left: 13px; flex: none; }
.opt.rad { padding-left: 31px; gap: 8px; }
.opt input { appearance: none; width: 13px; height: 13px; border: 1px solid #666; display: grid; place-items: center; background: #fff; }
.opt input[type=radio] { width: 12px; height: 12px; border-color: #999; border-radius: 50%; }
.opt input[type=radio]:checked::before { content: ""; width: 6px; height: 6px; border-radius: 50%; background: #666; }
.opt input[type=checkbox]:checked::before { content: ""; width: 9px; height: 9px; background: #555; clip-path: polygon(0 50%, 12% 38%, 38% 66%, 86% 4%, 100% 16%, 40% 96%); }
.bar { flex: none; height: 23px; margin: 17px 0 7px; padding-left: 6px; background: #eaeaea; border-bottom: 1px solid #e0e0e0; font-weight: bold; display: flex; align-items: center; }
.bar > label { width: 144px; white-space: nowrap; }
.drop { width: 142px; height: 22px; border: 1px solid #ababab; background: #fff; font-weight: normal; color: #444; display: flex; align-items: center; padding: 0 4px 0 5px; gap: 2px; }
.drop select { flex: 1; min-width: 0; }
.drop .caret { width: 8px; height: 5px; }
.marked { position: relative; flex: none; }
.frame { position: absolute; left: -2px; top: -1px; width: 142px; height: 25px; border: 3px solid #fe2712; border-radius: 4px; }
.arrow { position: absolute; left: 144px; top: -19px; }
.color { flex: none; display: flex; align-items: center; height: 29px; margin: 3px 0 0 14px; }
.color label { width: 87px; }
.color button { width: 46px; height: 29px; border: 1px solid #ababab; gap: 7px; background: #fdfdfd; }
.color .caret { width: 8px; height: 5px; }
.bar.last { height: 24px; margin-top: 14px; }
.scroll { width: 15px; margin: 2px 1px 1px 14px; background: #e6e6e6; display: flex; flex-direction: column; }
.scroll button { height: 15px; border: 1px solid #ababab; background: #fff; flex: none; }
.scroll .caret { width: 8px; height: 5px; }
.thumb { height: 120px; margin: 270px 0 auto; border: 1px solid #ababab; background: #fff; flex: none; }
.up { transform: rotate(180deg); }
.actions { display: flex; justify-content: flex-end; gap: 8px; margin-top: 4px; }
.actions button { width: 75px; height: 23px; border: 1px solid #999; background: #e6e6e6; color: #222; }
.actions .ok { border: 2px solid #217346; }
.grip { position: absolute; right: 2px; bottom: 2px; }

/* translucent site mark */
.watermark { position: absolute; left: 1284px; top: 703px; pointer-events: none; filter: drop-shadow(0 0 1px #8888); }
.wm, .wm-b, .wm-du, .wm-cn, .wm-url { fill: #fffc; stroke: #9995; stroke-width: 2px; paint-order: stroke; }
.wm-b { font: bold 67px "Liberation Sans", sans-serif; }
.wm-du { font: bold 39px "Liberation Sans", sans-serif; }
.wm-cn { font: 900 50px "Noto Sans CJK SC", sans-serif; }
.wm-url { font: 34px "Noto Sans", sans-serif; }
```
